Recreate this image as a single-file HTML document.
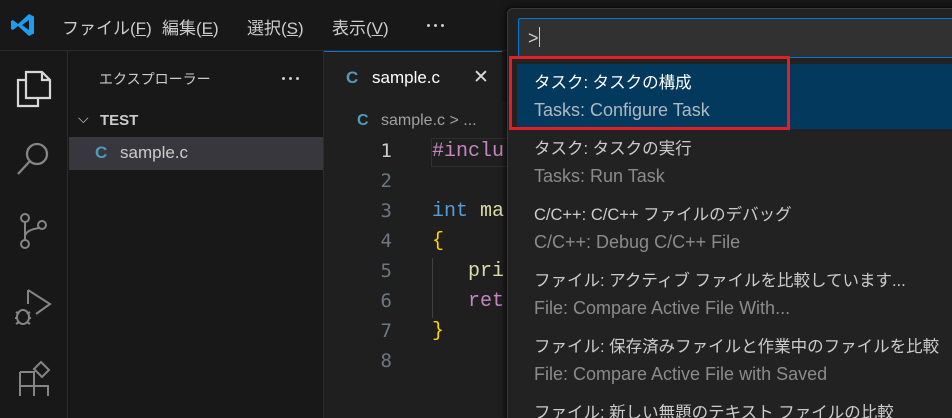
<!DOCTYPE html><html><head><meta charset="utf-8"><style>
*{margin:0;padding:0;box-sizing:border-box}
html,body{width:952px;height:418px;overflow:hidden}
body{background:#1f1f1f;font-family:"Liberation Sans","Noto Sans CJK JP",sans-serif;color:#ccc;position:relative}
.abs{position:absolute}
.title{left:0;top:0;width:952px;height:51px;background:#181818;border-bottom:1px solid #2b2b2b}
.menu{top:14px;font-size:17px;color:#ccc}
.act{left:0;top:51px;width:68px;height:367px;background:#181818;border-right:1px solid #2b2b2b}
.side{left:68px;top:51px;width:256px;height:367px;background:#181818;border-right:1px solid #2b2b2b}
.tabs{left:324px;top:51px;width:628px;height:51px;background:#181818}
.tab{left:324px;top:51px;width:178px;height:51px;background:#1f1f1f;border-top:1px solid #0078d4}
.mono{font-family:"Liberation Mono","DejaVu Sans Mono",monospace;font-size:20px}
.ln{width:60px;text-align:right;left:332px;color:#6e7681;font-size:19px;font-family:"DejaVu Sans Mono",monospace}
.pal{left:507px;top:8px;width:460px;height:420px;background:#222222;border:1px solid #3a3a3a;border-radius:6px;box-shadow:0 0 8px #000}
.t1{font-size:16.5px;color:#ccc;left:534px}
.t2{font-size:18px;color:#8b8b8b;left:534px}
.dots{display:flex;gap:4px}
.dots i{width:3px;height:3px;border-radius:50%;background:#ccc;display:block}
</style></head><body>
<div class="abs title"></div>
<svg class="abs" style="left:10px;top:12px" width="26" height="26" viewBox="0 0 26 26"><path d="M19 2 L24 4.5 V21.5 L19 24 L8 14 L3 18 L1 17 V9 L3 8 L8 12 Z M19 8 L12 13 L19 18 Z" fill="#1f9cf0"/></svg>
<div class="abs menu" style="left:62px">ファイル(<u>F</u>)</div>
<div class="abs menu" style="left:162px">編集(<u>E</u>)</div>
<div class="abs menu" style="left:247px">選択(<u>S</u>)</div>
<div class="abs menu" style="left:332px">表示(<u>V</u>)</div>
<div class="abs dots" style="left:427px;top:24px"><i></i><i></i><i></i></div>
<div class="abs act"></div>
<svg class="abs" style="left:14px;top:66px" width="40" height="44" fill="none" stroke="#d7d7d7" stroke-width="2.2"><path d="M12 6 H28 L36 14 V32 H12 Z M28 6 V14 H36"/><path d="M12 14 H4 V40 H24 V32"/></svg>
<svg class="abs" style="left:14px;top:138px" width="40" height="40" fill="none" stroke="#858585" stroke-width="2.3"><circle cx="23" cy="16" r="10"/><path d="M16 23 L4 36"/></svg>
<svg class="abs" style="left:14px;top:210px" width="40" height="44" fill="none" stroke="#858585" stroke-width="2"><circle cx="11" cy="8" r="4"/><circle cx="11" cy="34" r="4"/><circle cx="28" cy="15" r="4"/><path d="M11 12 V30 M11 26 Q12 20 25 18"/></svg>
<svg class="abs" style="left:12px;top:284px" width="42" height="44" fill="none" stroke="#858585" stroke-width="2"><path d="M16 6 V20 M16 6 L38 20 L24 30"/><ellipse cx="11" cy="33" rx="6" ry="7"/><path d="M4 28 L7 30 M18 28 L15 30 M3 34 H6 M16 34 H19 M4 40 L7 38 M18 40 L15 38"/></svg>
<svg class="abs" style="left:14px;top:356px" width="40" height="40" fill="none" stroke="#858585" stroke-width="2"><path d="M6 16 H20 V30 H34 V44 M6 16 V44 H34 M6 30 H20 V44"/><path d="M27 6 L35 14 L28 21 L20 13 Z"/></svg>
<div class="abs side"></div>
<div class="abs" style="left:99px;top:69px;font-size:14px;color:#ccc">エクスプローラー</div>
<div class="abs dots" style="left:282px;top:77px"><i></i><i></i><i></i></div>
<div class="abs" style="left:78px;top:110px;font-size:14px;color:#ccc">⌵</div>
<div class="abs" style="left:100px;top:112px;font-size:15px;font-weight:bold;color:#ccc">TEST</div>
<div class="abs" style="left:69px;top:137px;width:254px;height:33px;background:#37373d"></div>
<div class="abs" style="left:95px;top:143px;font-size:17px;font-weight:bold;color:#519aba">C</div>
<div class="abs" style="left:120px;top:143px;font-size:17px;color:#ccc">sample.c</div>
<div class="abs tabs"></div>
<div class="abs tab"></div>
<div class="abs" style="left:346px;top:68px;font-size:17px;font-weight:bold;color:#519aba">C</div>
<div class="abs" style="left:372px;top:68px;font-size:17px;color:#fff">sample.c</div>
<div class="abs" style="left:473px;top:66px;font-size:19px;color:#ddd">✕</div>
<div class="abs" style="left:357px;top:112px;font-size:16px;font-weight:bold;color:#519aba">C</div>
<div class="abs" style="left:381px;top:112px;font-size:16px;color:#a0a0a0">sample.c &gt; ...</div>
<div class="abs" style="left:431px;top:138px;width:80px;height:29px;border:1px solid #2f2f2f"></div>
<div class="abs ln" style="top:140px;color:#ccc">1</div>
<div class="abs ln" style="top:170px">2</div><div class="abs ln" style="top:200px">3</div><div class="abs ln" style="top:230px">4</div><div class="abs ln" style="top:260px">5</div><div class="abs ln" style="top:290px">6</div><div class="abs ln" style="top:320px">7</div><div class="abs ln" style="top:350px">8</div>
<div class="abs mono" style="left:432px;top:140px;color:#c586c0">#inclu</div>
<div class="abs mono" style="left:432px;top:200px"><span style="color:#569cd6">int</span> <span style="color:#dcdcaa">ma</span></div>
<div class="abs mono" style="left:432px;top:230px;color:#ffd700">{</div>
<div class="abs mono" style="left:468px;top:260px;color:#dcdcaa">pri</div>
<div class="abs mono" style="left:468px;top:290px;color:#c586c0">ret</div>
<div class="abs mono" style="left:432px;top:320px;color:#ffd700">}</div>
<div class="abs" style="left:432px;top:258px;width:1px;height:60px;background:#404040"></div>
<div class="abs pal"></div>
<div class="abs" style="left:518px;top:18px;width:440px;height:40px;background:#313131;border:1px solid #0078d4;border-radius:2px"></div>
<div class="abs" style="left:528px;top:27px;font-size:18px;color:#ccc">&gt;<span style="display:inline-block;width:1px;height:20px;background:#ccc;vertical-align:-3px"></span></div>
<div class="abs" style="left:517px;top:64px;width:440px;height:65px;background:#04395e"></div>
<div class="abs" style="left:509px;top:56px;width:281px;height:74px;border:3px solid #e41e26"></div>
<div class="abs t1" style="top:69px;color:#fff">タスク: タスクの構成</div>
<div class="abs t2" style="top:100px;color:#b0b8c0">Tasks: Configure Task</div>
<div class="abs t1" style="top:135px">タスク: タスクの実行</div>
<div class="abs t2" style="top:166px">Tasks: Run Task</div>
<div class="abs t1" style="top:201px">C/C++: C/C++ ファイルのデバッグ</div>
<div class="abs t2" style="top:232px">C/C++: Debug C/C++ File</div>
<div class="abs t1" style="top:267px">ファイル: アクティブ ファイルを比較しています...</div>
<div class="abs t2" style="top:298px">File: Compare Active File With...</div>
<div class="abs t1" style="top:333px">ファイル: 保存済みファイルと作業中のファイルを比較</div>
<div class="abs t2" style="top:364px">File: Compare Active File with Saved</div>
<div class="abs t1" style="top:399px">ファイル: 新しい無題のテキスト ファイルの比較</div>
</body></html>
